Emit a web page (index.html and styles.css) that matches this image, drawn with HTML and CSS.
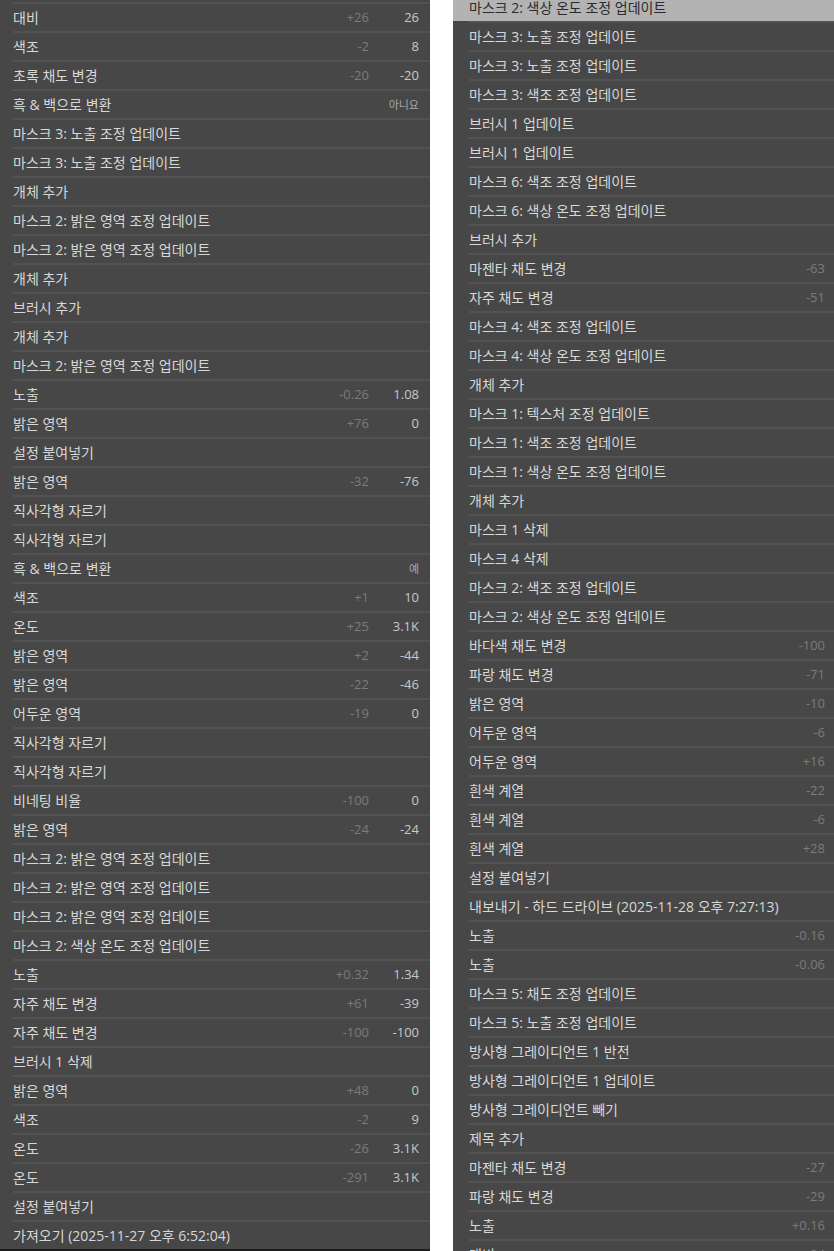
FILE: index.html
```html
<!DOCTYPE html>
<html lang="ko">
<head>
    <meta charset="UTF-8">
    <meta name="viewport" content="width=device-width, initial-scale=1.0">
    <title>작업 내역</title>
    <link rel="stylesheet" href="styles.css">
</head>
<body>
    <div class="page">
        <div class="panel left">
            <div class="row"><span class="name">대비</span><span class="old">+26</span><span class="new">26</span></div>
            <div class="row"><span class="name">색조</span><span class="old">-2</span><span class="new">8</span></div>
            <div class="row"><span class="name">초록 채도 변경</span><span class="old">-20</span><span class="new">-20</span></div>
            <div class="row"><span class="name">흑 &amp; 백으로 변환</span><span class="flag">아니요</span></div>
            <div class="row"><span class="name">마스크 3: 노출 조정 업데이트</span></div>
            <div class="row"><span class="name">마스크 3: 노출 조정 업데이트</span></div>
            <div class="row"><span class="name">개체 추가</span></div>
            <div class="row"><span class="name">마스크 2: 밝은 영역 조정 업데이트</span></div>
            <div class="row"><span class="name">마스크 2: 밝은 영역 조정 업데이트</span></div>
            <div class="row"><span class="name">개체 추가</span></div>
            <div class="row"><span class="name">브러시 추가</span></div>
            <div class="row"><span class="name">개체 추가</span></div>
            <div class="row"><span class="name">마스크 2: 밝은 영역 조정 업데이트</span></div>
            <div class="row"><span class="name">노출</span><span class="old">-0.26</span><span class="new">1.08</span></div>
            <div class="row"><span class="name">밝은 영역</span><span class="old">+76</span><span class="new">0</span></div>
            <div class="row"><span class="name">설정 붙여넣기</span></div>
            <div class="row"><span class="name">밝은 영역</span><span class="old">-32</span><span class="new">-76</span></div>
            <div class="row"><span class="name">직사각형 자르기</span></div>
            <div class="row"><span class="name">직사각형 자르기</span></div>
            <div class="row"><span class="name">흑 &amp; 백으로 변환</span><span class="flag yes">예</span></div>
            <div class="row"><span class="name">색조</span><span class="old">+1</span><span class="new">10</span></div>
            <div class="row"><span class="name">온도</span><span class="old">+25</span><span class="new">3.1K</span></div>
            <div class="row"><span class="name">밝은 영역</span><span class="old">+2</span><span class="new">-44</span></div>
            <div class="row"><span class="name">밝은 영역</span><span class="old">-22</span><span class="new">-46</span></div>
            <div class="row"><span class="name">어두운 영역</span><span class="old">-19</span><span class="new">0</span></div>
            <div class="row"><span class="name">직사각형 자르기</span></div>
            <div class="row"><span class="name">직사각형 자르기</span></div>
            <div class="row"><span class="name">비네팅 비율</span><span class="old">-100</span><span class="new">0</span></div>
            <div class="row"><span class="name">밝은 영역</span><span class="old">-24</span><span class="new">-24</span></div>
            <div class="row"><span class="name">마스크 2: 밝은 영역 조정 업데이트</span></div>
            <div class="row"><span class="name">마스크 2: 밝은 영역 조정 업데이트</span></div>
            <div class="row"><span class="name">마스크 2: 밝은 영역 조정 업데이트</span></div>
            <div class="row"><span class="name">마스크 2: 색상 온도 조정 업데이트</span></div>
            <div class="row"><span class="name">노출</span><span class="old">+0.32</span><span class="new">1.34</span></div>
            <div class="row"><span class="name">자주 채도 변경</span><span class="old">+61</span><span class="new">-39</span></div>
            <div class="row"><span class="name">자주 채도 변경</span><span class="old">-100</span><span class="new">-100</span></div>
            <div class="row"><span class="name">브러시 1 삭제</span></div>
            <div class="row"><span class="name">밝은 영역</span><span class="old">+48</span><span class="new">0</span></div>
            <div class="row"><span class="name">색조</span><span class="old">-2</span><span class="new">9</span></div>
            <div class="row"><span class="name">온도</span><span class="old">-26</span><span class="new">3.1K</span></div>
            <div class="row"><span class="name">온도</span><span class="old">-291</span><span class="new">3.1K</span></div>
            <div class="row"><span class="name">설정 붙여넣기</span></div>
            <div class="row"><span class="name">가져오기 (2025-11-27 오후 6:52:04)</span></div>
        </div>

        <div class="panel right">
            <div class="row active"><span class="name">마스크 2: 색상 온도 조정 업데이트</span></div>
            <div class="row"><span class="name">마스크 3: 노출 조정 업데이트</span></div>
            <div class="row"><span class="name">마스크 3: 노출 조정 업데이트</span></div>
            <div class="row"><span class="name">마스크 3: 색조 조정 업데이트</span></div>
            <div class="row"><span class="name">브러시 1 업데이트</span></div>
            <div class="row"><span class="name">브러시 1 업데이트</span></div>
            <div class="row"><span class="name">마스크 6: 색조 조정 업데이트</span></div>
            <div class="row"><span class="name">마스크 6: 색상 온도 조정 업데이트</span></div>
            <div class="row"><span class="name">브러시 추가</span></div>
            <div class="row"><span class="name">마젠타 채도 변경</span><span class="old">-63</span></div>
            <div class="row"><span class="name">자주 채도 변경</span><span class="old">-51</span></div>
            <div class="row"><span class="name">마스크 4: 색조 조정 업데이트</span></div>
            <div class="row"><span class="name">마스크 4: 색상 온도 조정 업데이트</span></div>
            <div class="row"><span class="name">개체 추가</span></div>
            <div class="row"><span class="name">마스크 1: 텍스처 조정 업데이트</span></div>
            <div class="row"><span class="name">마스크 1: 색조 조정 업데이트</span></div>
            <div class="row"><span class="name">마스크 1: 색상 온도 조정 업데이트</span></div>
            <div class="row"><span class="name">개체 추가</span></div>
            <div class="row"><span class="name">마스크 1 삭제</span></div>
            <div class="row"><span class="name">마스크 4 삭제</span></div>
            <div class="row"><span class="name">마스크 2: 색조 조정 업데이트</span></div>
            <div class="row"><span class="name">마스크 2: 색상 온도 조정 업데이트</span></div>
            <div class="row"><span class="name">바다색 채도 변경</span><span class="old">-100</span></div>
            <div class="row"><span class="name">파랑 채도 변경</span><span class="old">-71</span></div>
            <div class="row"><span class="name">밝은 영역</span><span class="old">-10</span></div>
            <div class="row"><span class="name">어두운 영역</span><span class="old">-6</span></div>
            <div class="row"><span class="name">어두운 영역</span><span class="old">+16</span></div>
            <div class="row"><span class="name">흰색 계열</span><span class="old">-22</span></div>
            <div class="row"><span class="name">흰색 계열</span><span class="old">-6</span></div>
            <div class="row"><span class="name">흰색 계열</span><span class="old">+28</span></div>
            <div class="row"><span class="name">설정 붙여넣기</span></div>
            <div class="row"><span class="name">내보내기 - 하드 드라이브 (2025-11-28 오후 7:27:13)</span></div>
            <div class="row"><span class="name">노출</span><span class="old">-0.16</span></div>
            <div class="row"><span class="name">노출</span><span class="old">-0.06</span></div>
            <div class="row"><span class="name">마스크 5: 채도 조정 업데이트</span></div>
            <div class="row"><span class="name">마스크 5: 노출 조정 업데이트</span></div>
            <div class="row"><span class="name">방사형 그레이디언트 1 반전</span></div>
            <div class="row"><span class="name">방사형 그레이디언트 1 업데이트</span></div>
            <div class="row"><span class="name">방사형 그레이디언트 빼기</span></div>
            <div class="row"><span class="name">제목 추가</span></div>
            <div class="row"><span class="name">마젠타 채도 변경</span><span class="old">-27</span></div>
            <div class="row"><span class="name">파랑 채도 변경</span><span class="old">-29</span></div>
            <div class="row"><span class="name">노출</span><span class="old">+0.16</span></div>
            <div class="row"><span class="name">대비</span><span class="old">+24</span></div>
        </div>
    </div>
</body>
</html>
```

FILE: styles.css
```css
body {
    margin: 0;
    background-color: #fff;
    font-family: "Open Sans", "Noto Sans CJK KR", sans-serif;
    font-size: 13px;
    color: #d8d8d8;
}

.page {
    display: flex;
    gap: 23px;
    height: 1251px;
    overflow: hidden;
}

.panel {
    background-color: #474747;
    overflow: hidden;
}

.left {
    width: 430px;
    padding-top: 2px;
    border-bottom: 2px solid #1c1c1c;
    box-sizing: border-box;
}

.right {
    flex: 1;
    margin-top: -8px;
}

.row {
    display: flex;
    align-items: center;
    height: 25px;
    padding-bottom: 2px;
    border-top: 2px solid #525252;
    white-space: nowrap;
}

.left .row {
    margin-left: 13px;
    padding-right: 11px;
}

.right .row {
    margin-left: 16px;
    padding-right: 9px;
}

.right .row.active {
    margin-left: 0;
    padding-left: 16px;
    background-color: #b3b3b3;
    border-top-color: #b3b3b3;
    color: #2b2b2b;
}

.name {
    flex: 1;
    font-size: 14px;
}

.old {
    width: 60px;
    text-align: right;
    color: #7b7b7b;
}

.new {
    width: 50px;
    text-align: right;
    color: #c8c8c8;
}

.flag {
    font-size: 11px;
    color: #a9a9a9;
}

.flag.yes {
    color: #a3a9b6;
}
```
